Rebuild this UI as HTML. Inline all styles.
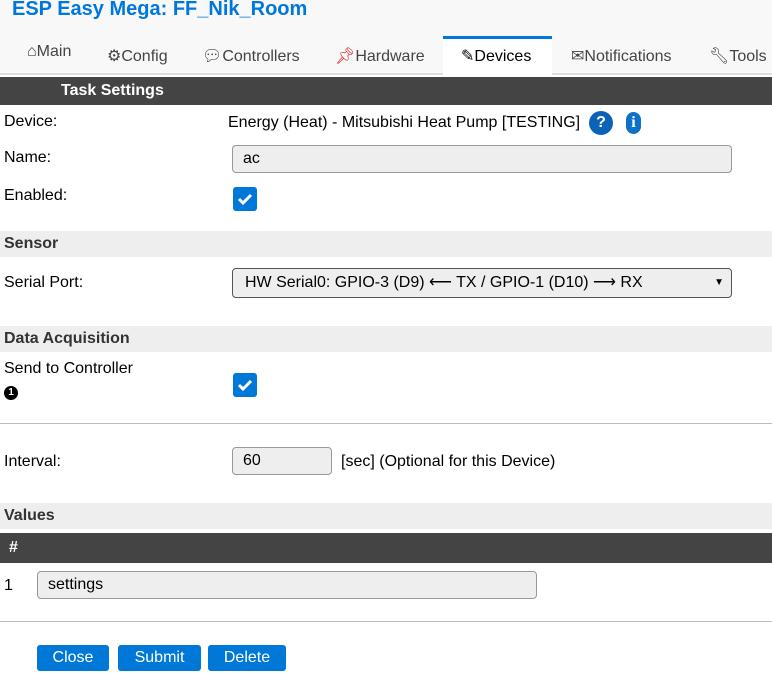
<html><head><style>
body{margin:0;background:#fff;font-family:"Liberation Sans",Arial,sans-serif;font-size:16px;color:#000;width:772px;height:675px;overflow:hidden;position:relative}
.a{position:absolute}
h1{position:absolute;left:12px;top:-2px;margin:0;font-size:20px;font-weight:bold;color:#07d;}
.top{position:absolute;left:0;top:0;width:772px;height:73px;background:#f8f8f8;border-bottom:2px solid #ddd}
.tab{position:absolute;top:46px;font-size:16px;color:#444}
.act{position:absolute;left:443px;top:36px;width:109px;height:40px;background:#fff;border-top:3px solid #07d;box-sizing:border-box}
.bar{position:absolute;left:0;width:772px;background:#444;color:#fff;font-weight:bold}
.sec{position:absolute;left:0;width:772px;height:26px;background:#eee;font-weight:bold;color:#333}
.inp{position:absolute;background:#eee;border:1px solid #999;border-radius:4px;box-sizing:border-box;padding-left:10px}
.cb{position:absolute;width:24px;height:24px;background:#0078d7;border-radius:3px}
.btn{position:absolute;top:645px;height:26px;background:#0078d7;color:#fff;border-radius:3px;text-align:center;line-height:26px}
hr{position:absolute;left:0;width:772px;margin:0;border:0;border-top:1px solid #bbb}
</style></head><body>
<div class="top"></div>
<h1>ESP Easy Mega: FF_Nik_Room</h1>
<div class="act"></div>
<div class="tab" style="left:27px;top:43px">⌂Main</div>
<div class="tab" style="left:107px">⚙Config</div>
<div class="tab" style="left:202px">💬︎Controllers</div>
<div class="tab" style="left:335px"><span style="color:#d22">📌︎</span>Hardware</div>
<div class="tab" style="left:461px;color:#000">✎Devices</div>
<div class="tab" style="left:571px">✉Notifications</div>
<div class="tab" style="left:709px">🔧︎Tools</div>
<div class="bar" style="top:77px;height:28px;line-height:28px"><span style="margin-left:61px">Task Settings</span></div>
<div class="a" style="left:4px;top:113px">Device:</div>
<div class="a" style="left:228px;top:114px">Energy (Heat) - Mitsubishi Heat Pump [TESTING]</div>
<div class="a" style="left:589px;top:111px;width:24px;height:24px;border-radius:50%;background:#0b63b8;color:#fff;text-align:center;line-height:24px;font-weight:bold">?</div>
<div class="a" style="left:626px;top:112px;width:15px;height:22px;border-radius:8px;background:#0b72c8;color:#fff;text-align:center;line-height:22px;font-weight:bold;font-family:'Liberation Serif',serif">i</div>
<div class="a" style="left:4px;top:149px">Name:</div>
<div class="inp" style="left:232px;top:145px;width:500px;height:28px;line-height:26px">ac</div>
<div class="a" style="left:4px;top:187px">Enabled:</div>
<div class="cb" style="left:233px;top:187px"><svg width="24" height="24"><path d="M6 12l4 4 8-8" stroke="#fff" stroke-width="3" fill="none"/></svg></div>
<div class="sec" style="top:231px;line-height:26px"><span style="margin-left:4px">Sensor</span></div>
<div class="a" style="left:4px;top:274px">Serial Port:</div>
<div class="inp" style="left:232px;top:268px;width:500px;height:30px;line-height:28px;border:1px solid #555;background:#eee;padding-left:12px">HW Serial0: GPIO-3 (D9) ⟵ TX / GPIO-1 (D10) ⟶ RX<span style="position:absolute;right:7px;font-size:10px">▼</span></div>
<div class="sec" style="top:326px;line-height:26px"><span style="margin-left:4px">Data Acquisition</span></div>
<div class="a" style="left:4px;top:360px">Send to Controller</div>
<div class="a" style="left:4px;top:386px;width:14px;height:14px;border-radius:50%;background:#000;color:#fff;font-size:10px;text-align:center;line-height:14px;font-weight:bold">1</div>
<div class="cb" style="left:233px;top:373px"><svg width="24" height="24"><path d="M6 12l4 4 8-8" stroke="#fff" stroke-width="3" fill="none"/></svg></div>
<hr style="top:423px">
<div class="a" style="left:4px;top:453px">Interval:</div>
<div class="inp" style="left:232px;top:447px;width:100px;height:28px;line-height:26px">60</div>
<div class="a" style="left:341px;top:453px">[sec] (Optional for this Device)</div>
<div class="sec" style="top:503px;line-height:26px"><span style="margin-left:4px">Values</span></div>
<div class="bar" style="top:533px;height:30px;line-height:30px"><span style="margin-left:9px">#</span></div>
<div class="a" style="left:4px;top:577px">1</div>
<div class="inp" style="left:37px;top:571px;width:500px;height:28px;line-height:26px">settings</div>
<hr style="top:621px">
<div class="btn" style="left:37px;width:72px">Close</div>
<div class="btn" style="left:118px;width:83px">Submit</div>
<div class="btn" style="left:208px;width:78px">Delete</div>
</body></html>
